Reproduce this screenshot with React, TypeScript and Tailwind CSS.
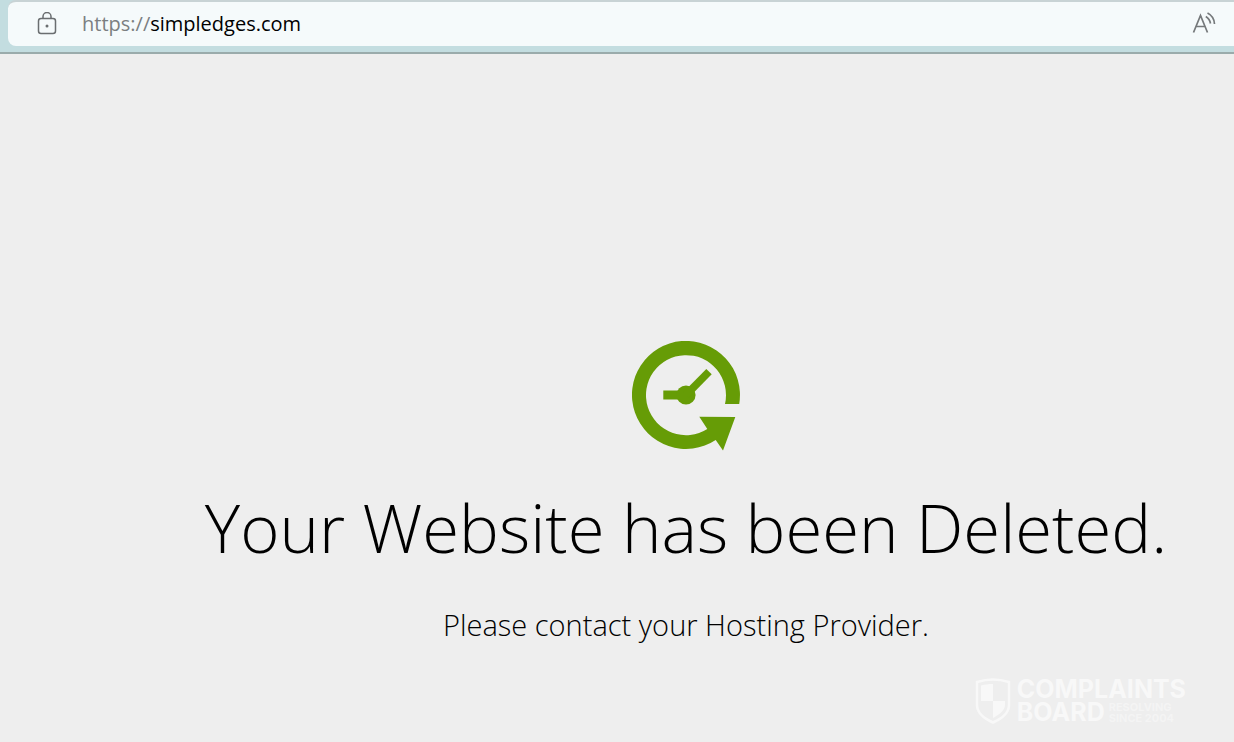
import React from "react";

const AddressBar = () => {
  return (
    <header className="bg-[#c3dde0] pl-2 pb-1.5 border-b-2 border-[#9aabab]">
      <div className="flex items-center h-[46px] pl-7 pr-[18px] rounded-l-lg bg-[#f5fafb] border-t-2 border-[#c8d3d5]">
        <button type="button" aria-label="View site information" className="mr-6 flex-shrink-0">
          <svg
            xmlns="http://www.w3.org/2000/svg"
            fill="none"
            viewBox="0 0 22 24"
            stroke="#6a6e70"
            strokeWidth="1.5"
            className="w-[22px] h-6"
          >
            <rect x="2.5" y="6.5" width="17" height="15" rx="2.5" />
            <path d="M7 6.500V4.500a4 4 0 018 0V6.500" />
            <circle cx="11" cy="14" r="1.500" fill="#6a6e70" stroke="none" />
          </svg>
        </button>
        <label htmlFor="address" className="text-[20px] text-[#7b7f81]">
          https://
        </label>
        <input
          id="address"
          type="text"
          defaultValue="simpledges.com"
          className="flex-1 min-w-0 bg-transparent text-[20px] text-black outline-none"
        />
        <button type="button" aria-label="Read aloud" className="flex-shrink-0">
          <svg
            xmlns="http://www.w3.org/2000/svg"
            fill="none"
            viewBox="0 0 24 24"
            stroke="#75797b"
            strokeWidth="1.7"
            className="w-6 h-6"
          >
            <path d="M1.500 20.500L8.500 3.500l7 17M4 14.500h9" />
            <path d="M13.800 4.500a10 10 0 014.700 7M15.500 1a13 13 0 017 11" />
          </svg>
        </button>
      </div>
    </header>
  );
};

const ClockArrow = () => {
  return (
    <svg
      xmlns="http://www.w3.org/2000/svg"
      viewBox="0 0 108 110"
      fill="#669c06"
      className="w-[108px] h-[110px]"
    >
      <path d="M107.200 63A54 54 0 1 0 83.700 99L91 109.500L103.300 76L67.300 75.800L75.300 88A40 40 0 1 1 93 63Z" />
      <rect x="31.300" y="49.500" width="20" height="9" />
      <circle cx="54" cy="54" r="9.600" />
      <path d="M54 54L77 30.700" stroke="#669c06" strokeWidth="7.600" />
    </svg>
  );
};

const Watermark = () => {
  return (
    <div className="absolute right-12 bottom-[18px] flex items-center gap-1.5 text-[#f8f8f8]">
      <svg xmlns="http://www.w3.org/2000/svg" viewBox="0 0 36 46" className="w-9 h-[46px]">
        <path
          d="M18 1.500C12 1.500 7 2.500 2 4v23c0 8 7 13.500 16 17.500C27 40.500 34 35 34 27V4C29 2.500 24 1.500 18 1.500Z"
          fill="none"
          stroke="currentColor"
          strokeWidth="2.500"
        />
        <path d="M18 6c-5 0-8 .500-12 1.500V23h12ZM18 23h12v4c0 5-5 9-12 13Z" fill="currentColor" />
      </svg>
      <div className="font-['Inter',sans-serif]">
        <div className="text-[25px] leading-[23px] font-bold">COMPLAINTS</div>
        <div className="flex items-center gap-1">
          <div className="text-[25px] leading-[23px] font-bold">BOARD</div>
          <div className="text-[11px] leading-[11px] text-[#f4f4f4] font-bold">
            <div>RESOLVING</div>
            <div>SINCE 2004</div>
          </div>
        </div>
      </div>
    </div>
  );
};

const App = () => {
  return (
    <div className="relative min-h-screen flex flex-col bg-[#eeeeee] font-['Open_Sans',sans-serif]">
      <AddressBar />
      <main className="flex-1 flex flex-col items-center pl-[138px] pt-[287px] text-black">
        <ClockArrow />
        <h1 className="mt-[30px] text-[67px] leading-[92px] font-light whitespace-nowrap">
          Your Website has been Deleted.
        </h1>
        <p className="mt-8 text-[29px] leading-10 font-light whitespace-nowrap">
          Please contact your Hosting Provider.
        </p>
      </main>
      <Watermark />
    </div>
  );
};

export default App;
